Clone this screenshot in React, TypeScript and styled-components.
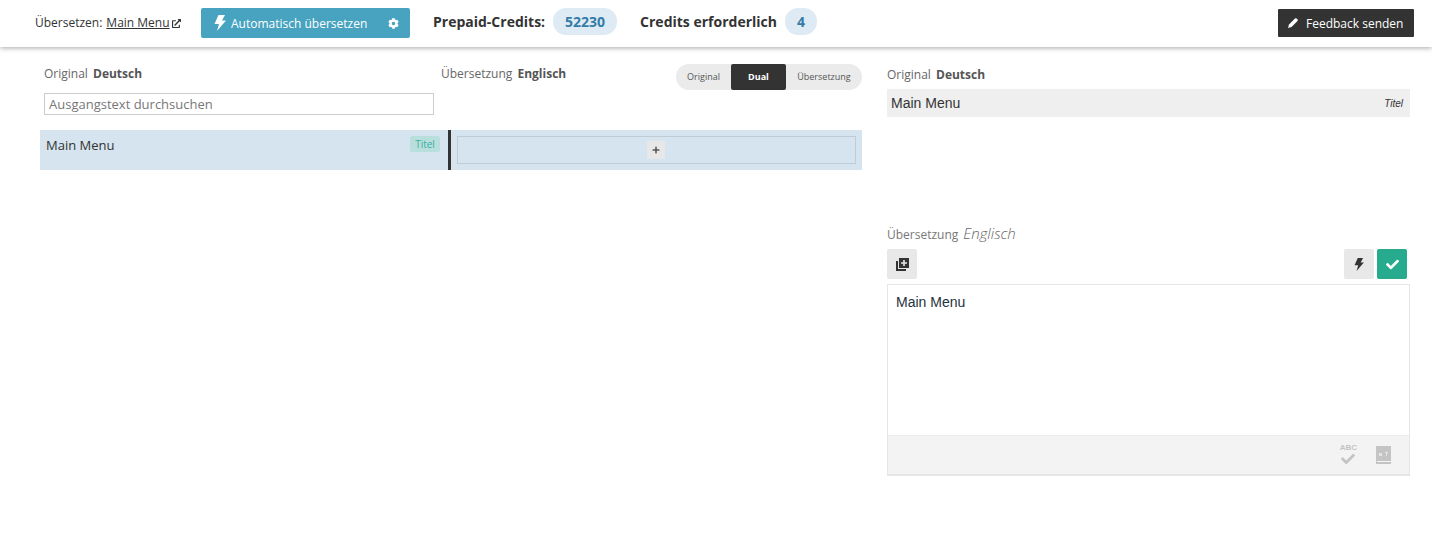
import React from "react";
import styled, { createGlobalStyle } from "styled-components";
import { FaCheck, FaCog, FaExternalLinkAlt, FaPlus } from "react-icons/fa";

const GlobalStyle = createGlobalStyle`
  html, body {
    margin: 0;
    padding: 0;
    background: #fff;
    font-family: "Open Sans", "Liberation Sans", sans-serif;
    color: #333;
  }
`;

const Page = styled.div`
  width: 1432px;
  height: 553px;
  overflow: hidden;
`;

const Header = styled.header`
  height: 47px;
  box-sizing: border-box;
  padding: 8px 18px 0 35px;
  display: flex;
  align-items: flex-start;
  background: #fff;
  box-shadow: 0 1px 5px rgba(0, 0, 0, 0.35);
`;

const Crumb = styled.div`
  font-size: 12px;
  line-height: 30px;
  color: #333;
  display: flex;
  align-items: center;
  width: 166px;
  white-space: nowrap;

  a {
    color: #333;
    text-decoration: underline;
    margin: 0 2px 0 4px;
  }
  svg {
    font-size: 9px;
  }
`;

const AutoButton = styled.button`
  width: 209px;
  height: 30px;
  box-sizing: border-box;
  padding: 0 11px 0 13px;
  display: flex;
  align-items: center;
  background: #47a3bf;
  color: #fff;
  border: 0;
  border-radius: 2px;
  font: 12px "Open Sans", sans-serif;

  span {
    margin-left: 5px;
    flex: 1;
    text-align: left;
  }
`;

const Stat = styled.div<{ $first?: boolean }>`
  margin-left: ${(p) => (p.$first ? "23px" : "0")};
  font-size: 14px;
  font-weight: 700;
  color: #333;
  line-height: 27px;
  white-space: nowrap;
`;

const Pill = styled.div<{ $width: number }>`
  width: ${(p) => p.$width}px;
  height: 27px;
  line-height: 27px;
  margin: 0 23px 0 8px;
  border-radius: 13px;
  background: #deebf4;
  color: #337ca8;
  font-size: 14px;
  font-weight: 700;
  text-align: center;
`;

const FeedbackButton = styled.button`
  margin: 1px 0 0 auto;
  width: 136px;
  height: 28px;
  box-sizing: border-box;
  padding: 0 0 0 10px;
  display: flex;
  align-items: center;
  gap: 8px;
  background: #333;
  color: #fff;
  border: 0;
  border-radius: 1px;
  font: 12px "Open Sans", sans-serif;
`;

const Main = styled.main`
  display: grid;
  grid-template-columns: 822px 523px;
  gap: 25px;
  padding: 0 0 0 40px;
`;

const Tools = styled.div`
  display: grid;
  grid-template-columns: 398px 424px;
  height: 83px;
`;

const SourceTools = styled.div`
  padding: 18px 0 0 4px;
`;

const TargetTools = styled.div`
  display: flex;
  align-items: flex-start;
  justify-content: space-between;
  padding: 18px 0 0 3px;
`;

const Label = styled.div`
  font-size: 12px;
  line-height: 17px;
  color: #666;
  white-space: nowrap;

  b {
    margin-left: 2px;
    font-weight: 700;
    color: #555;
  }
`;

const Search = styled.input`
  display: block;
  width: 390px;
  height: 22px;
  margin-top: 11px;
  box-sizing: border-box;
  padding: 0 4px;
  border: 1px solid #ccc;
  border-radius: 0;
  outline: 0;
  font: 13px "Open Sans", sans-serif;
  color: #777;

  &::placeholder {
    color: #777;
    opacity: 1;
  }
`;

const Toggle = styled.div`
  display: flex;
  height: 26px;
  margin-top: -1px;
  border-radius: 13px;
  background: #ebebeb;
  overflow: hidden;
`;

const ToggleItem = styled.div<{ $active?: boolean; $width: number }>`
  width: ${(p) => p.$width}px;
  text-align: center;
  font-size: 9px;
  line-height: 26px;
  font-weight: ${(p) => (p.$active ? 700 : 400)};
  color: ${(p) => (p.$active ? "#fff" : "#555")};
  background: ${(p) => (p.$active ? "#333" : "transparent")};
  border-radius: ${(p) => (p.$active ? "2px" : "0")};
`;

const SegmentRow = styled.div`
  display: grid;
  grid-template-columns: 408px 3px 1fr;
  height: 40px;
  background: #d5e4ee;
`;

const SourceCell = styled.div`
  display: flex;
  justify-content: space-between;
  align-items: flex-start;
  padding: 6px 8px 0 6px;
  font-size: 13px;
  line-height: 19px;
  color: #333;
`;

const Tag = styled.span`
  width: 30px;
  height: 16px;
  border-radius: 2px;
  background: #b9dfdd;
  color: #3ab09c;
  font-size: 10px;
  line-height: 17px;
  text-align: center;
`;

const Divider = styled.div`
  background: #333;
`;

const TargetCell = styled.div`
  padding: 6px;
  display: flex;
`;

const EmptyTarget = styled.div`
  flex: 1;
  display: flex;
  align-items: center;
  justify-content: center;
  border: 1px solid #bfcbd5;
`;

const PlusButton = styled.div`
  width: 18px;
  height: 18px;
  margin-right: 1px;
  display: flex;
  align-items: center;
  justify-content: center;
  background: #e8e8e8;
  border-radius: 1px;
  color: #555;

  svg {
    font-size: 8px;
  }
`;

const Side = styled.aside`
  padding-top: 19px;
`;

const SideLabel = styled(Label)`
  margin-bottom: 6px;
`;

const OriginalBox = styled.div`
  height: 28px;
  box-sizing: border-box;
  padding: 0 7px 0 4px;
  display: flex;
  align-items: center;
  justify-content: space-between;
  background: #efefef;
  font-family: "Liberation Sans", Arial, sans-serif;
  font-size: 14px;
  color: #333;

  i {
    font-size: 10px;
  }
`;

const TranslationHead = styled.div`
  display: flex;
  align-items: baseline;
  gap: 5px;
  margin-top: 106px;
  height: 20px;
  font-size: 12px;
  color: #777;

  em {
    font-size: 15px;
    font-weight: 300;
    color: #666;
  }
`;

const ActionRow = styled.div`
  display: flex;
  gap: 3px;
  margin-top: 6px;
  padding-right: 3px;
`;

const IconButton = styled.button<{ $primary?: boolean }>`
  width: 30px;
  height: 30px;
  padding: 0;
  display: flex;
  align-items: center;
  justify-content: center;
  border: 0;
  border-radius: 2px;
  background: ${(p) => (p.$primary ? "#27ab8f" : "#e8e8e8")};
  color: ${(p) => (p.$primary ? "#fff" : "#333")};
`;

const Spacer = styled.div`
  flex: 1;
`;

const Editor = styled.div`
  margin-top: 5px;
  box-sizing: border-box;
  border: 1px solid #e6e6e6;
  border-bottom-width: 2px;
  height: 192px;
  display: flex;
  flex-direction: column;
`;

const EditorText = styled.div`
  flex: 1;
  padding: 9px 8px;
  font-family: "Liberation Sans", Arial, sans-serif;
  font-size: 14px;
  line-height: 17px;
  color: #24323d;
`;

const EditorFooter = styled.div`
  height: 39px;
  box-sizing: border-box;
  display: flex;
  align-items: center;
  justify-content: flex-end;
  gap: 19px;
  padding: 0 18px 0 0;
  background: #f3f3f3;
  border-top: 1px solid #ececec;
  color: #c4c4c4;
`;

const SpellCheck = styled.div`
  display: flex;
  flex-direction: column;
  align-items: center;
  font-family: "Liberation Sans", Arial, sans-serif;
  font-size: 8px;
  font-weight: 700;
  line-height: 8px;

  svg {
    font-size: 14px;
  }
`;

const BoltIcon = ({ width, height }: { width: number; height: number }) => (
  <svg width={width} height={height} viewBox="0 0 12 16" fill="currentColor">
    <polygon points="4.5,0 11,0 8,5.5 12,5.5 3,16 5,9 0.5,9" />
  </svg>
);

const PencilIcon = () => (
  <svg width="10" height="10" viewBox="0 0 10 10" fill="currentColor">
    <path d="M0 10 L1 6.5 L7 0.5 Q8 0 9 0.7 L9.5 1.2 Q10 2 9.5 3 L3.5 9 Z" />
  </svg>
);

const AddCopyIcon = () => (
  <svg width="13" height="13" viewBox="0 0 13 13">
    <path fill="#333" d="M3 0H13V10H3ZM0 3H2V11H10V13H0Z" />
    <path fill="#e8e8e8" d="M7.2 2H8.8V4.2H11V5.8H8.8V8H7.2V5.8H5V4.2H7.2Z" />
  </svg>
);

const GlossaryIcon = () => (
  <svg width="15" height="18" viewBox="0 0 15 18">
    <rect x="0" y="0" width="15" height="15" fill="#c4c4c4" />
    <rect x="0" y="15" width="1" height="3" fill="#c4c4c4" />
    <rect x="0" y="16" width="15" height="2" fill="#c4c4c4" />
    <rect x="3" y="7" width="3" height="3" fill="#e4e4e4" />
    <rect x="9" y="6" width="3" height="1" fill="#e4e4e4" />
    <rect x="10" y="7" width="1" height="3" fill="#e4e4e4" />
  </svg>
);

export default function App() {
  return (
    <Page>
      <GlobalStyle />
      <Header>
        <Crumb>
          Übersetzen: <a href="#">Main Menu</a>
          <FaExternalLinkAlt />
        </Crumb>
        <AutoButton>
          <BoltIcon width={12} height={16} />
          <span>Automatisch übersetzen</span>
          <FaCog size={11} />
        </AutoButton>
        <Stat $first>Prepaid-Credits:</Stat>
        <Pill $width={64}>52230</Pill>
        <Stat>Credits erforderlich</Stat>
        <Pill $width={32}>4</Pill>
        <FeedbackButton>
          <PencilIcon />
          Feedback senden
        </FeedbackButton>
      </Header>
      <Main>
        <section>
          <Tools>
            <SourceTools>
              <Label>
                Original <b>Deutsch</b>
              </Label>
              <Search placeholder="Ausgangstext durchsuchen" />
            </SourceTools>
            <TargetTools>
              <Label>
                Übersetzung <b>Englisch</b>
              </Label>
              <Toggle>
                <ToggleItem $width={55}>Original</ToggleItem>
                <ToggleItem $width={55} $active>
                  Dual
                </ToggleItem>
                <ToggleItem $width={76}>Übersetzung</ToggleItem>
              </Toggle>
            </TargetTools>
          </Tools>
          <SegmentRow>
            <SourceCell>
              Main Menu
              <Tag>Titel</Tag>
            </SourceCell>
            <Divider />
            <TargetCell>
              <EmptyTarget>
                <PlusButton>
                  <FaPlus />
                </PlusButton>
              </EmptyTarget>
            </TargetCell>
          </SegmentRow>
        </section>
        <Side>
          <SideLabel>
            Original <b>Deutsch</b>
          </SideLabel>
          <OriginalBox>
            Main Menu
            <i>Titel</i>
          </OriginalBox>
          <TranslationHead>
            Übersetzung <em>Englisch</em>
          </TranslationHead>
          <ActionRow>
            <IconButton>
              <AddCopyIcon />
            </IconButton>
            <Spacer />
            <IconButton>
              <BoltIcon width={10} height={13} />
            </IconButton>
            <IconButton $primary>
              <FaCheck size={13} />
            </IconButton>
          </ActionRow>
          <Editor>
            <EditorText>Main Menu</EditorText>
            <EditorFooter>
              <SpellCheck>
                ABC
                <FaCheck />
              </SpellCheck>
              <GlossaryIcon />
            </EditorFooter>
          </Editor>
        </Side>
      </Main>
    </Page>
  );
}
